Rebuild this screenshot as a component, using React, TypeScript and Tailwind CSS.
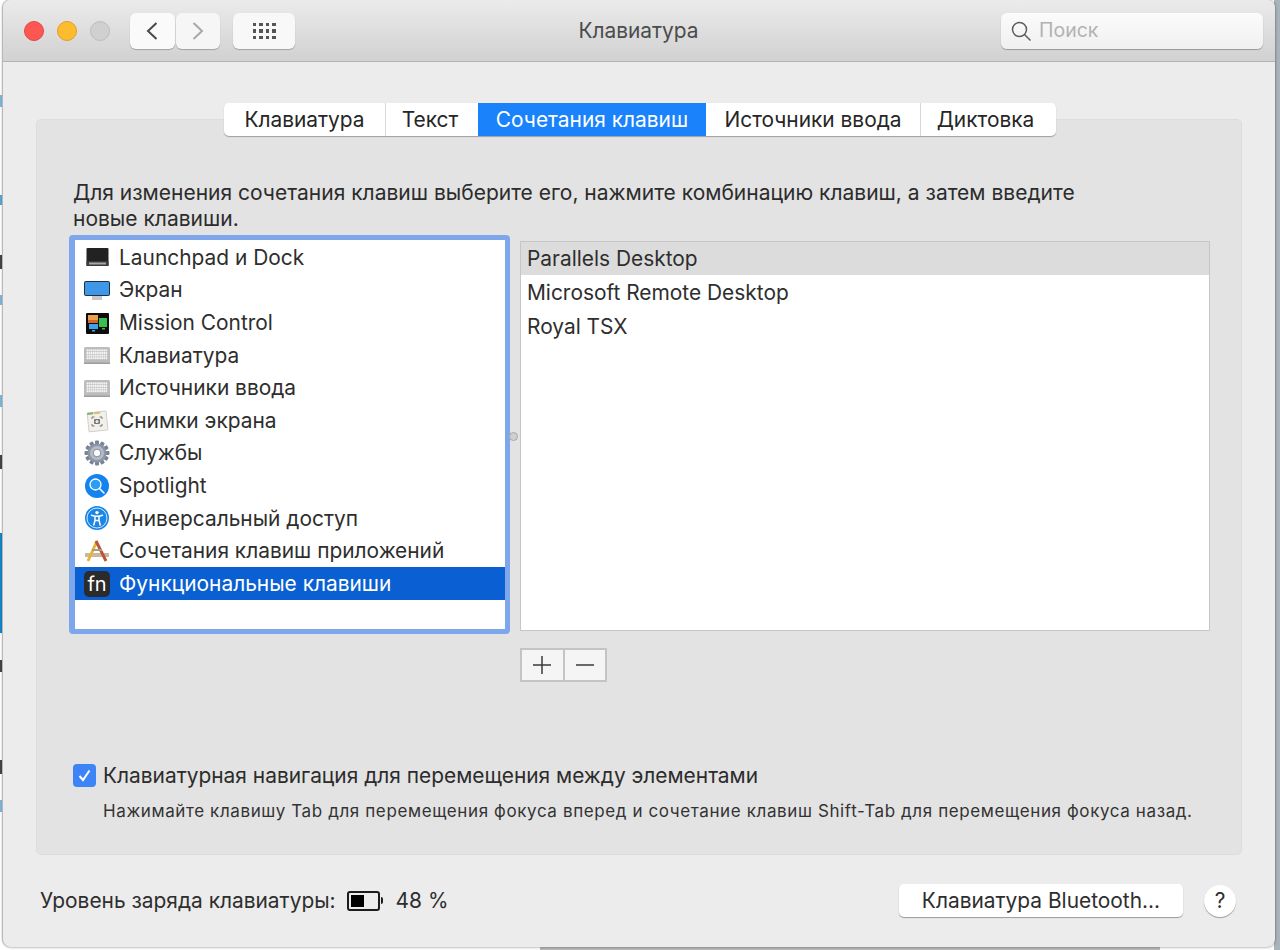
const font = { fontFamily: "Inter, 'Noto Sans', sans-serif" };

function LaunchpadIcon() {
  return (
    <svg width="26" height="24" viewBox="0 0 26 24">
      <rect x="2.500" y="3" width="22" height="18" rx="1" fill="#222" />
      <rect x="2.500" y="16" width="22" height="5" fill="#3a3a3a" />
      <rect x="5" y="17.500" width="17" height="2" fill="#a9a9a9" />
    </svg>
  );
}

function ScreenIcon() {
  return (
    <svg width="28" height="24" viewBox="0 0 28 24">
      <rect x="9" y="17" width="10" height="5" fill="#c8c8c8" />
      <rect x="1" y="3" width="26" height="15" rx="2" fill="#1f2f45" />
      <rect x="2" y="4" width="24" height="13" rx="1" fill="#3f97e8" />
    </svg>
  );
}

function MissionIcon() {
  return (
    <svg width="26" height="24" viewBox="0 0 26 24">
      <rect x="2" y="2" width="23" height="21" rx="1" fill="#0c0c0c" />
      <rect x="4" y="4" width="10" height="5" fill="#eca04a" />
      <rect x="4" y="9" width="10" height="3" fill="#d5662e" />
      <rect x="15" y="7" width="8" height="9" fill="#38c04e" />
      <rect x="5" y="13" width="9" height="5" fill="#3aa5ee" />
      <rect x="8" y="19" width="3" height="1.500" fill="#3aa5ee" />
      <rect x="18" y="17" width="3" height="1.500" fill="#38c04e" />
    </svg>
  );
}

function KeyboardIcon() {
  const keys: React.ReactNode[] = [];
  for (let r = 0; r < 4; r++) {
    for (let c = 0; c < 10; c++) {
      keys.push(<rect key={`${r}-${c}`} x={3.6 + c * 2.1} y={6.4 + r * 2.6} width="1.7" height="2" fill="#f4f4f4" />);
    }
  }
  return (
    <svg width="28" height="24" viewBox="0 0 28 24">
      <rect x="1" y="4" width="26" height="17" rx="1.500" fill="#bcbcbc" />
      <rect x="1" y="19.500" width="26" height="1.500" fill="#9e9e9e" />
      {keys}
    </svg>
  );
}

function ShotIcon() {
  return (
    <svg width="26" height="24" viewBox="0 0 26 24">
      <rect x="4" y="3" width="19" height="19" rx="1" fill="#f2f0ea" stroke="#d3d0c8" transform="rotate(-6 13 12)" />
      <rect x="4" y="3" width="6" height="2" fill="#7fb26a" transform="rotate(-6 13 12)" />
      <rect x="11" y="3" width="6" height="2" fill="#e3b46c" transform="rotate(-6 13 12)" />
      <path d="M8 10V8h2.500M15.500 8H18v2M18 15v2h-2.500M10.500 17H8v-2" fill="none" stroke="#777" strokeWidth="1" />
      <rect x="10" y="10" width="6" height="5" rx="1" fill="#777" />
      <circle cx="13" cy="12.500" r="1.500" fill="#eee" />
    </svg>
  );
}

function GearIcon() {
  const teeth = [0, 30, 60, 90, 120, 150];
  return (
    <svg width="28" height="26" viewBox="0 0 28 26">
      {teeth.map((a) => (
        <rect key={a} x="12" y="0.500" width="4" height="25" rx="1" fill="#7a8394" transform={`rotate(${a} 14 13)`} />
      ))}
      <circle cx="14" cy="13" r="9.500" fill="#8d96a6" />
      <circle cx="14" cy="13" r="7" fill="#b6bcc7" />
      <circle cx="14" cy="13" r="3.800" fill="#fbfbfb" stroke="#6f7888" strokeWidth="0.800" />
    </svg>
  );
}

function SpotlightIcon() {
  return (
    <svg width="26" height="26" viewBox="0 0 26 26">
      <circle cx="13" cy="13" r="12" fill="#1583ee" />
      <circle cx="11.500" cy="11.500" r="5.500" fill="#2d9cf5" stroke="#fff" strokeWidth="1.300" />
      <path d="M15.500 15.500 20 20" stroke="#fff" strokeWidth="1.500" strokeLinecap="round" />
    </svg>
  );
}

function AccessIcon() {
  return (
    <svg width="26" height="26" viewBox="0 0 26 26">
      <circle cx="13" cy="13" r="12" fill="#1b86e6" />
      <circle cx="13" cy="13" r="10" fill="none" stroke="#cfe6fb" strokeWidth="1" />
      <circle cx="13" cy="7.600" r="1.700" fill="#fff" />
      <path d="M7.500 10.300 11 11.300v4L9.800 20M18.500 10.300 15 11.300v4L16.200 20M11 11.300h4M11.500 15.500h3" fill="none" stroke="#fff" strokeWidth="1.500" strokeLinecap="round" />
    </svg>
  );
}

function AppShortcutsIcon() {
  return (
    <svg width="28" height="26" viewBox="0 0 28 26">
      <path d="M2 15h24v4H2z" fill="#c9b99c" />
      <path d="M14 3 5 23" stroke="#e3b53c" strokeWidth="3" />
      <path d="M13 3 23 23" stroke="#b8553a" strokeWidth="3" />
      <path d="M9 11h10v2H9z" fill="#a99a80" />
    </svg>
  );
}

function FnIcon() {
  return (
    <div className="flex h-[26px] w-[26px] items-center justify-center rounded-[5px] bg-[#2b2b2b] text-[20px] leading-none text-white">fn</div>
  );
}

const leftRows: { label: string; icon: React.ReactNode }[] = [
  { label: "Launchpad и Dock", icon: <LaunchpadIcon /> },
  { label: "Экран", icon: <ScreenIcon /> },
  { label: "Mission Control", icon: <MissionIcon /> },
  { label: "Клавиатура", icon: <KeyboardIcon /> },
  { label: "Источники ввода", icon: <KeyboardIcon /> },
  { label: "Снимки экрана", icon: <ShotIcon /> },
  { label: "Службы", icon: <GearIcon /> },
  { label: "Spotlight", icon: <SpotlightIcon /> },
  { label: "Универсальный доступ", icon: <AccessIcon /> },
  { label: "Сочетания клавиш приложений", icon: <AppShortcutsIcon /> },
  { label: "Функциональные клавиши", icon: <FnIcon /> },
];

const tabs = [
  { label: "Клавиатура", w: "w-[161px]" },
  { label: "Текст", w: "w-[93px] pr-[4px]" },
  { label: "Сочетания клавиш", w: "w-[228px]", active: true },
  { label: "Источники ввода", w: "w-[214px]" },
  { label: "Диктовка", w: "w-[136px] pr-[6px]" },
];

function TitleBar() {
  return (
    <div className="flex h-[62px] shrink-0 items-center border-b border-[#b4b4b4] bg-gradient-to-b from-[#ebebeb] to-[#d1d1d1] pt-[1px]">
      <div className="ml-[21px] flex items-center gap-[13px]">
        <div className="h-[20px] w-[20px] rounded-full border border-[#e5463f] bg-[#fc5753]" />
        <div className="h-[20px] w-[20px] rounded-full border border-[#e0a020] bg-[#fdbc2e]" />
        <div className="h-[20px] w-[20px] rounded-full border border-[#bdbdbd] bg-[#d0d0d0]" />
      </div>
      <div className="ml-[20px] flex h-[36px] w-[90px] gap-[1px]">
        <div className="flex flex-1 items-center justify-center rounded-[6px] bg-[#fafafa] shadow-[0_1px_1px_rgba(0,0,0,0.25)]">
          <svg width="14" height="20" viewBox="0 0 14 20">
            <path d="M11.500 2 3 10l8.500 8" fill="none" stroke="#4a4a4a" strokeWidth="2" />
          </svg>
        </div>
        <div className="flex flex-1 items-center justify-center rounded-[6px] bg-[#f6f6f6] shadow-[0_1px_1px_rgba(0,0,0,0.25)]">
          <svg width="14" height="20" viewBox="0 0 14 20">
            <path d="M2.500 2 11 10l-8.500 8" fill="none" stroke="#a8a8a8" strokeWidth="2" />
          </svg>
        </div>
      </div>
      <div className="ml-[13px] flex h-[36px] w-[62px] items-center justify-center rounded-[6px] bg-[#f8f8f8] shadow-[0_1px_1px_rgba(0,0,0,0.25)]">
        <div className="grid grid-cols-4 gap-x-[3px] gap-y-[3px]">
          {Array.from({ length: 12 }).map((_, i) => (
            <div key={i} className="h-[3.500px] w-[3.500px] bg-[#555]" />
          ))}
        </div>
      </div>
      <div className="flex-1 pr-[19px] text-center text-[20.900px] text-[#4c4c4c]">Клавиатура</div>
      <div className="mr-[12px] flex h-[36px] w-[262px] items-center rounded-[6px] bg-gradient-to-b from-[#fbfbfb] to-[#f0f0f0] pl-[9px] shadow-[0_1px_1px_rgba(0,0,0,0.3)]">
        <svg width="22" height="22" viewBox="0 0 22 22">
          <circle cx="9.500" cy="9.500" r="7" fill="none" stroke="#5c5c5c" strokeWidth="1.500" />
          <path d="M14.500 14.500 20.500 20.500" stroke="#5c5c5c" strokeWidth="1.500" />
        </svg>
        <span className="ml-[7px] text-[19.500px] text-[#b2b2b2]">Поиск</span>
      </div>
    </div>
  );
}

function Panel() {
  return (
    <div className="relative mx-[33px] mt-[57px] h-[736px] rounded-[5px] border border-[#dcdcdc] bg-[#e3e3e3]">
      <div className="absolute left-[187px] top-[-17px] flex h-[33px] overflow-hidden rounded-[5px] bg-white text-[20.900px] text-[#262626] shadow-[0_1px_1px_rgba(0,0,0,0.3)]">
        {tabs.map((t, i) => (
          <div
            key={t.label}
            className={`flex items-center justify-center ${t.w} ${
              t.active ? "bg-[#1a82fb] text-white" : i > 0 && i !== 3 ? "border-l border-[#d8d8d8]" : ""
            }`}
          >
            {t.label}
          </div>
        ))}
      </div>

      <div className="pl-[36px] pt-[60px] text-[21px] leading-[26px] text-[#2c2c2c]">
        Для изменения сочетания клавиш выберите его, нажмите комбинацию клавиш, а затем введите
        <br />
        новые клавиши.
      </div>

      <div className="mt-[3px] flex pl-[32px]">
        <div className="h-[399px] w-[441px] shrink-0 rounded-[4px] border-[5px] border-l-[6px] border-[#7ea6ea] bg-white pt-[1px]">
          {leftRows.map((r) => {
            const selected = r.label === "Функциональные клавиши";
            return (
              <div
                key={r.label}
                className={`flex h-[32.650px] items-center text-[20.900px] ${
                  selected ? "bg-[#0a5fd2] text-white" : "text-[#2e2e2e]"
                }`}
              >
                <div className="flex w-[44px] shrink-0 justify-center">{r.icon}</div>
                <span>{r.label}</span>
              </div>
            );
          })}
        </div>
        <div className="flex w-[10px] shrink-0 items-start">
          <div className="-ml-[1px] mt-[197px] h-[9px] w-[9px] shrink-0 rounded-full border border-[#a8a8a8] bg-[#cfcfcf]" />
        </div>
        <div className="mt-[6px]">
          <div className="h-[390px] w-[690px] border border-[#c6c6c6] bg-white text-[20.900px] text-[#2e2e2e]">
            <div className="flex h-[33px] items-center bg-[#dcdcdc] pl-[6px]">Parallels Desktop</div>
            <div className="flex h-[34.500px] items-center pl-[6px]">Microsoft Remote Desktop</div>
            <div className="flex h-[34.500px] items-center pl-[6px]">Royal TSX</div>
          </div>
          <div className="mt-[17px] flex h-[34px] w-[87px] border-2 border-[#c4c4c4] bg-[#f5f5f5]">
            <div className="flex flex-1 items-center justify-center border-r-2 border-[#c4c4c4]">
              <svg width="20" height="20" viewBox="0 0 20 20">
                <path d="M10 1v18M1 10h18" stroke="#3a3a3a" strokeWidth="1.500" />
              </svg>
            </div>
            <div className="flex flex-1 items-center justify-center">
              <svg width="20" height="20" viewBox="0 0 20 20">
                <path d="M1 10h18" stroke="#3a3a3a" strokeWidth="1.500" />
              </svg>
            </div>
          </div>
        </div>
      </div>

      <div className="mt-[78px] flex items-center pl-[36px]">
        <div className="flex h-[23px] w-[23px] items-center justify-center rounded-[4px] bg-[#3d84f6]">
          <svg width="15" height="15" viewBox="0 0 15 15">
            <path d="M2.500 8 6 12l6.500-9.500" fill="none" stroke="#fff" strokeWidth="2" />
          </svg>
        </div>
        <span className="ml-[7px] text-[20.900px] text-[#2c2c2c]">Клавиатурная навигация для перемещения между элементами</span>
      </div>
      <div className="mt-[8px] pl-[66px] text-[17px] leading-[24px] tracking-[0.61px] text-[#333]">
        Нажимайте клавишу Tab для перемещения фокуса вперед и сочетание клавиш Shift-Tab для перемещения фокуса назад.
      </div>
    </div>
  );
}

function BottomBar() {
  return (
    <div className="flex items-center pt-[29px]">
      <span className="ml-[37px] text-[20.900px] text-[#2e2e2e]">Уровень заряда клавиатуры:</span>
      <div className="ml-[11px] flex items-center">
        <div className="flex h-[20px] w-[33px] items-center rounded-[3px] border-2 border-[#1c1c1c] pl-[2px]">
          <div className="h-[12px] w-[13px] bg-black" />
        </div>
        <div className="ml-[1px] h-[7px] w-[2px] rounded-r-sm bg-[#1c1c1c]" />
      </div>
      <span className="ml-[13px] text-[20.900px] text-[#2e2e2e]">48 %</span>
      <div className="ml-auto flex h-[33px] w-[284px] items-center justify-center rounded-[5px] bg-white text-[20.900px] text-[#2e2e2e] shadow-[0_1px_1px_rgba(0,0,0,0.35)]">
        Клавиатура Bluetooth...
      </div>
      <div className="ml-[21px] mr-[39px] flex h-[32px] w-[32px] items-center justify-center rounded-full bg-white text-[20.900px] text-[#2e2e2e] shadow-[0_1px_1px_rgba(0,0,0,0.35)]">
        ?
      </div>
    </div>
  );
}

export default function App() {
  return (
    <div style={font} className="relative h-[950px] w-[1280px] overflow-hidden bg-white">
      <div className="absolute right-0 top-0 h-full w-[6px] bg-[#a9b3ba]" />
      <div className="absolute bottom-0 left-[540px] h-[3px] w-[620px] bg-[#b9b9b9]" />
      <div className="absolute left-0 top-[533px] h-[100px] w-[3px] bg-[#1287c9]" />
      <div className="absolute left-0 top-[95px] h-[12px] w-[3px] bg-[#7fb8dd]" />
      <div className="absolute left-0 top-[195px] h-[10px] w-[3px] bg-[#5aa5d6]" />
      <div className="absolute left-0 top-[255px] h-[14px] w-[3px] bg-[#444]" />
      <div className="absolute left-0 top-[295px] h-[10px] w-[3px] bg-[#7fb8dd]" />
      <div className="absolute left-0 top-[395px] h-[12px] w-[3px] bg-[#7fb8dd]" />
      <div className="absolute left-0 top-[455px] h-[14px] w-[3px] bg-[#444]" />
      <div className="absolute left-0 top-[660px] h-[12px] w-[3px] bg-[#444]" />
      <div className="absolute left-0 top-[760px] h-[14px] w-[3px] bg-[#444]" />
      <div className="absolute left-0 top-[800px] h-[12px] w-[3px] bg-[#7fb8dd]" />

      <div className="relative ml-[3px] flex h-[947px] w-[1272px] flex-col overflow-hidden rounded-[8px] bg-[#ececec] shadow-[-1px_0_0_#b8b8b8,0_0_3px_rgba(0,0,0,0.5)]">
        <TitleBar />
        <Panel />
        <BottomBar />
      </div>
    </div>
  );
}
